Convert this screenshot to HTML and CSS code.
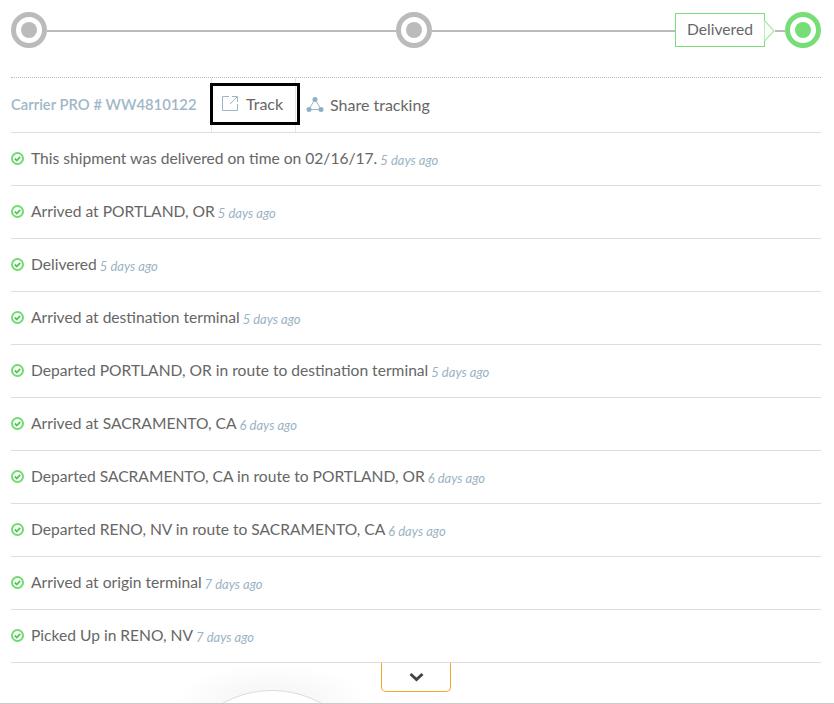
FILE: index.html
```html
<!DOCTYPE html>
<html lang="en">
<head>
<meta charset="utf-8">
<title>Shipment tracking</title>
<link rel="stylesheet" href="styles.css">
</head>
<body>
<main class="panel">
  <div class="stepper">
    <span class="node"></span>
    <span class="line line-first"></span>
    <span class="node"></span>
    <span class="line"></span>
    <span class="tag">Delivered</span>
    <svg class="tag-arrow" width="11" height="33" viewBox="0 0 11 33"><path d="M0.500 6.500 10 17 0.500 27" fill="#fff" stroke="#a8eaa8" stroke-width="1.200"/></svg>
    <span class="line line-short"></span>
    <span class="node node-done"></span>
  </div>
  <div class="toolbar">
    <span class="carrier">Carrier PRO # WW4810122</span>
    <a class="track" href="#">
      <svg width="17" height="17" viewBox="0 0 17 17" fill="none" stroke="#9db6c6" stroke-width="1"><path d="M7 1.500H0.500V15.500H15.500V9"/><path d="M8 9 15 2M10 1.500H15.500V7"/></svg>
      Track
    </a>
    <span class="share">
      <svg width="18" height="17" viewBox="0 0 18 17"><path d="M9 3 3 13.500H15Z" fill="none" stroke="#9db6c6" stroke-width="1"/><circle cx="9" cy="3.500" r="2.500" fill="#8fb0c4"/><circle cx="3" cy="13.500" r="2.500" fill="#8fb0c4"/><circle cx="15" cy="13.500" r="2.500" fill="#8fb0c4"/></svg>
      Share tracking
    </span>
  </div>
  <ul class="events">
    <li class="event"><svg class="check" width="13" height="13" viewBox="0 0 13 13"><circle cx="6.500" cy="6.500" r="5.500" fill="none" stroke="#6fdc6f" stroke-width="2"/><path d="M3.800 6.500 5.800 8.500 9.200 4.800" fill="none" stroke="#55c455" stroke-width="1.800"/></svg><span>This shipment was delivered on time on 02/16/17.</span> <em>5 days ago</em></li>
    <li class="event"><svg class="check" width="13" height="13" viewBox="0 0 13 13"><circle cx="6.500" cy="6.500" r="5.500" fill="none" stroke="#6fdc6f" stroke-width="2"/><path d="M3.800 6.500 5.800 8.500 9.200 4.800" fill="none" stroke="#55c455" stroke-width="1.800"/></svg><span>Arrived at PORTLAND, OR</span> <em>5 days ago</em></li>
    <li class="event"><svg class="check" width="13" height="13" viewBox="0 0 13 13"><circle cx="6.500" cy="6.500" r="5.500" fill="none" stroke="#6fdc6f" stroke-width="2"/><path d="M3.800 6.500 5.800 8.500 9.200 4.800" fill="none" stroke="#55c455" stroke-width="1.800"/></svg><span>Delivered</span> <em>5 days ago</em></li>
    <li class="event"><svg class="check" width="13" height="13" viewBox="0 0 13 13"><circle cx="6.500" cy="6.500" r="5.500" fill="none" stroke="#6fdc6f" stroke-width="2"/><path d="M3.800 6.500 5.800 8.500 9.200 4.800" fill="none" stroke="#55c455" stroke-width="1.800"/></svg><span>Arrived at destination terminal</span> <em>5 days ago</em></li>
    <li class="event"><svg class="check" width="13" height="13" viewBox="0 0 13 13"><circle cx="6.500" cy="6.500" r="5.500" fill="none" stroke="#6fdc6f" stroke-width="2"/><path d="M3.800 6.500 5.800 8.500 9.200 4.800" fill="none" stroke="#55c455" stroke-width="1.800"/></svg><span>Departed PORTLAND, OR in route to destination terminal</span> <em>5 days ago</em></li>
    <li class="event"><svg class="check" width="13" height="13" viewBox="0 0 13 13"><circle cx="6.500" cy="6.500" r="5.500" fill="none" stroke="#6fdc6f" stroke-width="2"/><path d="M3.800 6.500 5.800 8.500 9.200 4.800" fill="none" stroke="#55c455" stroke-width="1.800"/></svg><span>Arrived at SACRAMENTO, CA</span> <em>6 days ago</em></li>
    <li class="event"><svg class="check" width="13" height="13" viewBox="0 0 13 13"><circle cx="6.500" cy="6.500" r="5.500" fill="none" stroke="#6fdc6f" stroke-width="2"/><path d="M3.800 6.500 5.800 8.500 9.200 4.800" fill="none" stroke="#55c455" stroke-width="1.800"/></svg><span>Departed SACRAMENTO, CA in route to PORTLAND, OR</span> <em>6 days ago</em></li>
    <li class="event"><svg class="check" width="13" height="13" viewBox="0 0 13 13"><circle cx="6.500" cy="6.500" r="5.500" fill="none" stroke="#6fdc6f" stroke-width="2"/><path d="M3.800 6.500 5.800 8.500 9.200 4.800" fill="none" stroke="#55c455" stroke-width="1.800"/></svg><span>Departed RENO, NV in route to SACRAMENTO, CA</span> <em>6 days ago</em></li>
    <li class="event"><svg class="check" width="13" height="13" viewBox="0 0 13 13"><circle cx="6.500" cy="6.500" r="5.500" fill="none" stroke="#6fdc6f" stroke-width="2"/><path d="M3.800 6.500 5.800 8.500 9.200 4.800" fill="none" stroke="#55c455" stroke-width="1.800"/></svg><span>Arrived at origin terminal</span> <em>7 days ago</em></li>
    <li class="event"><svg class="check" width="13" height="13" viewBox="0 0 13 13"><circle cx="6.500" cy="6.500" r="5.500" fill="none" stroke="#6fdc6f" stroke-width="2"/><path d="M3.800 6.500 5.800 8.500 9.200 4.800" fill="none" stroke="#55c455" stroke-width="1.800"/></svg><span>Picked Up in RENO, NV</span> <em>7 days ago</em></li>
  </ul>
</main>
<footer class="footer">
  <div class="glow"></div>
  <div class="dome"></div>
  <button class="toggle" type="button" aria-label="Show more">
    <svg width="15" height="10" viewBox="0 0 15 10"><path d="M1.500 2 7.500 7.500 13.500 2" fill="none" stroke="#444" stroke-width="3"/></svg>
  </button>
</footer>
</body>
</html>
```
FILE: styles.css
```css
* { box-sizing: border-box; }
html, body { height: 100%; }
body {
  margin: 0;
  position: relative;
  overflow: hidden;
  background: #fff;
  color: #666;
  font-family: Lato, "Liberation Sans", sans-serif;
  font-size: 15.6px;
}
.panel { padding: 12px 13px 0 11px; }
.stepper {
  display: flex;
  align-items: center;
  height: 36px;
  margin-bottom: 29px;
}
.node {
  flex: none;
  width: 36px;
  height: 36px;
  border-radius: 50%;
  border: 5px solid #bbb;
  background: #fff;
  display: flex;
  align-items: center;
  justify-content: center;
}
.node::after {
  content: "";
  width: 16px;
  height: 16px;
  border-radius: 50%;
  background: #bbb;
}
.node-done { border-color: #77dd77; }
.node-done::after { background: #77dd77; }
.line { flex: 1; height: 2px; margin-top: 2px; background: #bbb; }
.line-first { flex: none; width: 349px; }
.line-short { flex: none; width: 10px; }
.tag {
  flex: none;
  width: 90px;
  height: 34px;
  line-height: 31px;
  text-align: center;
  border: 1px solid #77dd77;
  background: #fff;
  font-size: 15.6px;
}
.tag-arrow { flex: none; margin-left: -1px; }
.toolbar {
  display: flex;
  align-items: center;
  height: 56px;
  padding-bottom: 2px;
  border-top: 1px dotted #bbb;
  border-bottom: 1px solid #ddd;
  font-size: 16px;
}
.carrier {
  color: #9fb7c7;
  font-weight: 600;
  font-size: 14.8px;
  width: 200px;
  flex: none;
}
.track {
  flex: none;
  display: flex;
  align-items: center;
  gap: 7px;
  align-self: stretch;
  width: 85px;
  margin-bottom: -2px;
  padding: 0 0 4px 10px;
  color: #666;
  text-decoration: none;
  border-left: 1px solid #e5e5e5;
  border-right: 1px solid #e5e5e5;
  position: relative;
}
.track::after {
  content: "";
  position: absolute;
  left: -2px;
  right: -5px;
  top: 5px;
  bottom: 7px;
  border: 3px solid #000;
}
.share {
  display: flex;
  align-items: center;
  gap: 6px;
  margin-left: 10px;
}
.events { list-style: none; margin: 0; padding: 0; }
.event {
  height: 53px;
  display: flex;
  align-items: center;
  gap: 7px;
  padding-bottom: 2px;
  border-bottom: 1px solid #ddd;
}
.event em {
  color: #9ab3c4;
  font-size: 13px;
  margin-left: -4px;
  padding-top: 4px;
}
.check { flex: none; }
.footer {
  position: absolute;
  left: 0;
  right: 0;
  bottom: 0;
  height: 41px;
  overflow: hidden;
}
.glow {
  position: absolute;
  left: 172px;
  top: 0;
  width: 200px;
  height: 80px;
  background: radial-gradient(ellipse at center 50%, #f3f3f3 0, #fff 70%);
}
.dome {
  position: absolute;
  left: 170px;
  top: 27px;
  width: 204px;
  height: 204px;
  border-radius: 50%;
  border: 1px solid #ddd;
  background: #fff;
}
.footer::after {
  content: "";
  position: absolute;
  left: 0;
  right: 0;
  bottom: 0;
  height: 1px;
  background: #ccc;
}
.toggle {
  position: absolute;
  left: 381px;
  top: 0;
  width: 70px;
  height: 29px;
  padding: 0;
  background: #fff;
  border: 1px solid #f5a623;
  border-top: 0;
  border-radius: 0 0 5px 5px;
  display: flex;
  align-items: center;
  justify-content: center;
}
```
